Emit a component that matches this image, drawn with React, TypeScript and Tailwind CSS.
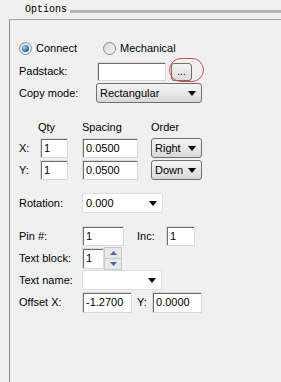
import React from 'react';

const font = { fontFamily: '"Liberation Sans", Arial, sans-serif' };

function TextBox({ w, value = '', h = 'h-[20px]' }: { w: string; value?: string; h?: string }) {
  return (
    <div className={`${w} ${h} border border-[#d8d8d8] bg-white shadow-[inset_1px_1px_0_#6e6e6e] flex items-center pl-[3px] text-[11px] leading-none`}>
      {value}
    </div>
  );
}

function Arrow() {
  return (
    <svg width="8" height="5" viewBox="0 0 8 5" className="shrink-0">
      <path d="M0 0h8L4 5z" fill="#000" />
    </svg>
  );
}

function ButtonSelect({ w, value }: { w: string; value: string }) {
  return (
    <div className={`${w} h-[20px] rounded-[3px] border border-[#707070] bg-gradient-to-b from-[#f4f4f4] via-[#e8e8e8] to-[#d8d8d8] flex items-center justify-between pl-[3px] pr-[5px] text-[11px] leading-none`}>
      <span>{value}</span>
      <Arrow />
    </div>
  );
}

function WhiteCombo({ w, value = '' }: { w: string; value?: string }) {
  return (
    <div className={`${w} h-[20px] rounded-[2px] border border-[#dcdcdc] bg-white flex items-center justify-between pl-[3px] pr-[5px] text-[11px] leading-none`}>
      <span>{value}</span>
      <Arrow />
    </div>
  );
}

function Radio({ checked }: { checked?: boolean }) {
  return (
    <div className="w-[13px] h-[13px] rounded-full border border-[#8a8a8a] bg-gradient-to-br from-[#d8d8d8] to-[#f8f8f8] flex items-center justify-center">
      {checked && (
        <div className="w-[7px] h-[7px] rounded-full bg-[radial-gradient(circle_at_35%_35%,#9fd8ff,#1a6fc4_60%,#0b3e86)]" />
      )}
    </div>
  );
}

export default function App() {
  return (
    <div className="w-[281px] h-[382px] bg-[#f0f0f0] overflow-hidden text-black" style={font}>
      <div className="h-[19px] flex items-center pl-[25px]">
        <span className="text-[10px] leading-none text-[#000]" style={{ fontFamily: '"Liberation Mono", "Courier New", monospace' }}>
          Options
        </span>
        <div className="flex-1 h-[3px] bg-[#b4b4b4] ml-[3px] mt-[3px]" />
      </div>
      <div className="ml-[9px] h-[363px] border-l border-t border-l-[#8e8e9a] border-t-[#a8a8a8] pl-[9px] flex flex-col text-[11px]">
        <div className="mt-[18px] h-[20px] flex items-center">
          <Radio checked />
          <span className="ml-[4px] w-[67px]">Connect</span>
          <Radio />
          <span className="ml-[4px]">Mechanical</span>
        </div>

        <div className="mt-[4px] h-[19px] flex items-center">
          <span className="w-[78px]">Padstack:</span>
          <TextBox w="w-[69px]" h="h-[19px]" />
          <div className="relative ml-[5px]">
            <div className="w-[21px] h-[18px] rounded-[3px] border border-[#707070] bg-gradient-to-b from-[#f4f4f4] to-[#dcdcdc] flex items-end justify-center pb-[3px] text-[10px] leading-none">
              ...
            </div>
            <div className="absolute left-[-2px] top-[-5px] w-[35px] h-[24px] rounded-full border border-[#e04848]" />
          </div>
        </div>

        <div className="mt-[2px] h-[20px] flex items-center">
          <span className="w-[77px]">Copy mode:</span>
          <ButtonSelect w="w-[106px]" value="Rectangular" />
        </div>

        <div className="mt-[17px] h-[15px] flex items-center">
          <span className="w-[19px]" />
          <span className="w-[44px]">Qty</span>
          <span className="w-[69px]">Spacing</span>
          <span>Order</span>
        </div>

        <div className="mt-[3px] h-[20px] flex items-center">
          <span className="w-[21px]">X:</span>
          <TextBox w="w-[28px]" value="1" />
          <div className="ml-[14px]"><TextBox w="w-[56px]" value="0.0500" /></div>
          <div className="ml-[13px]"><ButtonSelect w="w-[51px]" value="Right" /></div>
        </div>

        <div className="mt-[2px] h-[20px] flex items-center">
          <span className="w-[21px]">Y:</span>
          <TextBox w="w-[28px]" value="1" />
          <div className="ml-[14px]"><TextBox w="w-[56px]" value="0.0500" /></div>
          <div className="ml-[13px]"><ButtonSelect w="w-[51px]" value="Down" /></div>
        </div>

        <div className="mt-[13px] h-[20px] flex items-center">
          <span className="w-[63px]">Rotation:</span>
          <WhiteCombo w="w-[81px]" value="0.000" />
        </div>

        <div className="mt-[13px] h-[20px] flex items-center">
          <span className="w-[63px]">Pin #:</span>
          <TextBox w="w-[42px]" value="1" />
          <span className="ml-[13px] w-[29px]">Inc:</span>
          <TextBox w="w-[29px]" value="1" />
        </div>

        <div className="mt-[1px] h-[23px] flex items-center">
          <span className="w-[63px]">Text block:</span>
          <TextBox w="w-[22px]" h="h-[21px]" value="1" />
          <div className="w-[18px] h-[23px] flex flex-col border border-[#c8c8c8] bg-[#e8e8e8]">
            <div className="flex-1 border-b border-[#c8c8c8] flex items-center justify-center">
              <svg width="7" height="4" viewBox="0 0 7 4"><path d="M0 4h7L3.5 0z" fill="#4a68b0" /></svg>
            </div>
            <div className="flex-1 flex items-center justify-center">
              <svg width="7" height="4" viewBox="0 0 7 4"><path d="M0 0h7L3.5 4z" fill="#4a68b0" /></svg>
            </div>
          </div>
        </div>

        <div className="mt-[0px] h-[20px] flex items-center">
          <span className="w-[63px]">Text name:</span>
          <WhiteCombo w="w-[80px]" />
        </div>

        <div className="mt-[2px] h-[21px] flex items-center">
          <span className="w-[63px]">Offset X:</span>
          <TextBox w="w-[50px]" h="h-[21px]" value="-1.2700" />
          <span className="ml-[5px] w-[15px]">Y:</span>
          <TextBox w="w-[50px]" h="h-[21px]" value="0.0000" />
        </div>
      </div>
    </div>
  );
}
